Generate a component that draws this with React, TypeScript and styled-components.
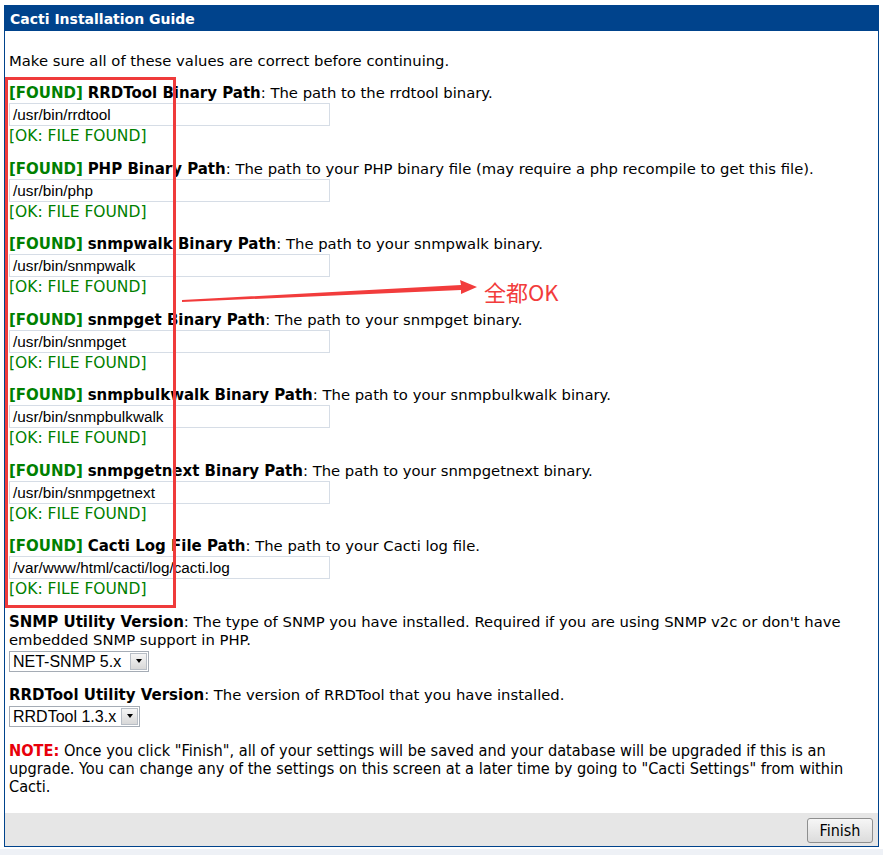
import React from "react";
import styled, { createGlobalStyle } from "styled-components";

const GlobalStyle = createGlobalStyle`
  html, body { margin: 0; padding: 0; background: #ffffff; }
  body { font-family: "DejaVu Sans", Verdana, sans-serif; }
`;

const Page = styled.div`
  position: relative;
  width: 883px;
  height: 855px;
  padding: 5px 4px 0 4px;
  box-sizing: border-box;
  display: flex;
  flex-direction: column;
  overflow: hidden;
`;

const Panel = styled.div`
  border: 1px solid #00438c;
  display: flex;
  flex-direction: column;
  width: 875px;
  box-sizing: border-box;
  flex: none;
`;

const Header = styled.div`
  background: #00438c;
  color: #ffffff;
  font-weight: bold;
  font-size: 14px;
  height: 25px;
  line-height: 27px;
  padding-left: 5px;
`;

const Body = styled.div`
  padding: 21px 4px 17px 4px;
  font-size: 14.8px;
  color: #000;
  display: flex;
  flex-direction: column;
`;

const Intro = styled.div`
  line-height: 18px;
  margin-bottom: 14px;
`;

const Section = styled.div`
  display: flex;
  flex-direction: column;
  margin-bottom: 13.5px;
`;

const Label = styled.div`
  line-height: 18px;
  white-space: nowrap;
`;

const Found = styled.span`
  color: #008000;
  font-weight: bold;
  font-size: 15px;
`;

const Name = styled.span`
  font-weight: bold;
  font-size: 15px;
`;

const PathInput = styled.div`
  width: 321px;
  height: 23px;
  box-sizing: border-box;
  border: 1px solid #d6dde6;
  font-family: "Liberation Sans", Arial, sans-serif;
  font-size: 15.3px;
  line-height: 21px;
  padding-left: 3px;
  margin-top: 1px;
`;

const Ok = styled.div`
  color: #008000;
  line-height: 20px;
  font-size: 15.5px;
`;

const SelectBox = styled.div<{ $w: number }>`
  display: flex;
  align-items: stretch;
  width: ${(p) => p.$w}px;
  height: 21px;
  box-sizing: border-box;
  border: 1px solid #a5acb5;
  font-family: "Liberation Sans", Arial, sans-serif;
  font-size: 16px;
  margin-top: 2px;
`;

const SelectText = styled.div`
  flex: 1;
  padding-left: 3px;
  line-height: 19px;
  white-space: nowrap;
`;

const ArrowBtn = styled.div`
  width: 17px;
  margin: 1px;
  border: 1px solid #b8bec6;
  box-sizing: border-box;
  background: linear-gradient(#f5f5f5, #d8d8d8);
  display: flex;
  align-items: center;
  justify-content: center;
`;

const Tri = styled.div`
  width: 0;
  height: 0;
  border-left: 3.5px solid transparent;
  border-right: 3.5px solid transparent;
  border-top: 4px solid #000;
`;

const VersionBlock = styled.div`
  display: flex;
  flex-direction: column;
  margin-bottom: 14px;
`;

const Para = styled.div`
  line-height: 18px;
`;

const Note = styled.div`
  font-family: "Liberation Sans Narrow", "DejaVu Sans Condensed", "Liberation Sans", sans-serif;
  font-stretch: condensed;
  font-size: 16.2px;
  line-height: 18px;
  margin-top: 1px;
`;

const NoteLabel = styled.span`
  color: #e8000b;
  font-weight: bold;
`;

const Footer = styled.div`
  background: #e6e6e6;
  height: 33px;
  display: flex;
  justify-content: flex-end;
  align-items: center;
  padding-right: 5px;
`;

const FinishButton = styled.div`
  width: 66px;
  height: 25px;
  box-sizing: border-box;
  border: 1px solid #8e8f8f;
  border-radius: 3px;
  background: linear-gradient(#f6f6f6, #dcdcdc);
  font-family: "Liberation Sans Narrow", "DejaVu Sans Condensed", "Liberation Sans", sans-serif;
  font-stretch: condensed;
  font-size: 16px;
  display: flex;
  align-items: center;
  justify-content: center;
  margin-top: 3px;
`;

const BottomStrip = styled.div`
  margin: 2px -4px 0 -4px;
  flex: 1;
  min-height: 0;
  background: #eef1f6;
`;

const RedBox = styled.div`
  position: absolute;
  left: 5px;
  top: 77px;
  width: 171px;
  height: 531px;
  box-sizing: border-box;
  border: 3px solid #ef3b3b;
  pointer-events: none;
`;

const ArrowSvg = styled.svg`
  position: absolute;
  left: 0;
  top: 0;
  pointer-events: none;
`;

const Annotation = styled.div`
  position: absolute;
  left: 484px;
  top: 276px;
  color: #f23c3c;
  font-family: "Noto Sans CJK SC", "Noto Sans", sans-serif;
  font-size: 22px;
  line-height: 30px;
`;

const items = [
  { name: "RRDTool Binary Path", desc: "The path to the rrdtool binary.", value: "/usr/bin/rrdtool" },
  { name: "PHP Binary Path", desc: "The path to your PHP binary file (may require a php recompile to get this file).", value: "/usr/bin/php" },
  { name: "snmpwalk Binary Path", desc: "The path to your snmpwalk binary.", value: "/usr/bin/snmpwalk" },
  { name: "snmpget Binary Path", desc: "The path to your snmpget binary.", value: "/usr/bin/snmpget" },
  { name: "snmpbulkwalk Binary Path", desc: "The path to your snmpbulkwalk binary.", value: "/usr/bin/snmpbulkwalk" },
  { name: "snmpgetnext Binary Path", desc: "The path to your snmpgetnext binary.", value: "/usr/bin/snmpgetnext" },
  { name: "Cacti Log File Path", desc: "The path to your Cacti log file.", value: "/var/www/html/cacti/log/cacti.log" },
];

export default function App() {
  return (
    <>
      <GlobalStyle />
      <Page>
        <Panel>
          <Header>Cacti Installation Guide</Header>
          <Body>
            <Intro>Make sure all of these values are correct before continuing.</Intro>
            {items.map((it) => (
              <Section key={it.name}>
                <Label>
                  <Found>[FOUND]</Found> <Name>{it.name}</Name>: {it.desc}
                </Label>
                <PathInput>{it.value}</PathInput>
                <Ok>[OK: FILE FOUND]</Ok>
              </Section>
            ))}
            <VersionBlock>
              <Para>
                <Name>SNMP Utility Version</Name>: The type of SNMP you have installed. Required if you are using SNMP v2c or don't have embedded SNMP support in PHP.
              </Para>
              <SelectBox $w={140}>
                <SelectText>NET-SNMP 5.x</SelectText>
                <ArrowBtn><Tri /></ArrowBtn>
              </SelectBox>
            </VersionBlock>
            <VersionBlock>
              <Para>
                <Name>RRDTool Utility Version</Name>: The version of RRDTool that you have installed.
              </Para>
              <SelectBox $w={131}>
                <SelectText>RRDTool 1.3.x</SelectText>
                <ArrowBtn><Tri /></ArrowBtn>
              </SelectBox>
            </VersionBlock>
            <Note>
              <NoteLabel>NOTE:</NoteLabel> Once you click "Finish", all of your settings will be saved and your database will be upgraded if this is an upgrade. You can change any of the settings on this screen at a later time by going to "Cacti Settings" from within Cacti.
            </Note>
          </Body>
          <Footer>
            <FinishButton>Finish</FinishButton>
          </Footer>
        </Panel>
        <BottomStrip />
        <RedBox />
        <ArrowSvg width="883" height="855" viewBox="0 0 883 855">
          <polygon points="182,300 461,285 460,280 477,287 461,294 461,290 182,302" fill="#f23c3c" />
        </ArrowSvg>
        <Annotation>全都OK</Annotation>
      </Page>
    </>
  );
}
